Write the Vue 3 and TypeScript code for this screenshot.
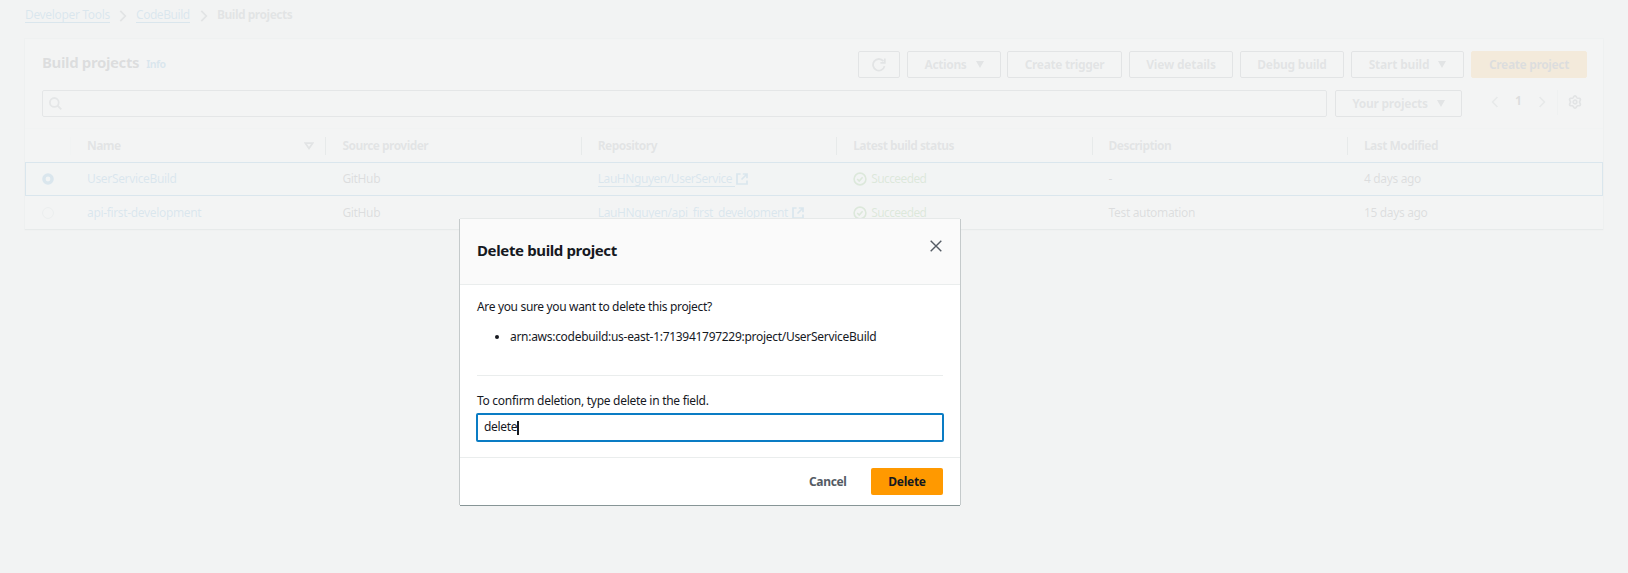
<script setup lang="ts">
import { ref } from 'vue'

interface Project {
  name: string
  provider: string
  repo: string
  status: string
  description: string
  modified: string
}

const columns: string[] = ['Name', 'Source provider', 'Repository', 'Latest build status', 'Description', 'Last Modified']

const projects: Project[] = [
  { name: 'UserServiceBuild', provider: 'GitHub', repo: 'LauHNguyen/UserService', status: 'Succeeded', description: '-', modified: '4 days ago' },
  { name: 'api-first-development', provider: 'GitHub', repo: 'LauHNguyen/api_first_development', status: 'Succeeded', description: 'Test automation', modified: '15 days ago' },
]

const selected = ref<string>('UserServiceBuild')
const confirmation = ref<string>('delete')

// Six-toothed gear outline around (7, 7), first tooth pointing up.
const gear: string =
  'M' +
  Array.from({ length: 72 }, (_, i) => {
    const a = (i / 72) * Math.PI * 2
    const r = 5.3 + 0.8 * Math.cos(6 * a)
    return `${(7 + r * Math.sin(a)).toFixed(2)} ${(7 - r * Math.cos(a)).toFixed(2)}`
  }).join('L') +
  'Z'
</script>

<template>
  <div class="page">
    <nav class="crumbs">
      <a class="crumb">Developer Tools</a>
      <svg class="chev" viewBox="0 0 8 12"><path d="M1.3 .8 6.3 6 1.3 11.2" /></svg>
      <a class="crumb code">CodeBuild</a>
      <svg class="chev" viewBox="0 0 8 12"><path d="M1.3 .8 6.3 6 1.3 11.2" /></svg>
      <span class="current">Build projects</span>
    </nav>

    <section class="panel">
      <header class="panel-head">
        <h1>Build projects</h1>
        <a class="info">Info</a>
        <div class="actions">
          <button class="btn refresh" aria-label="Refresh">
            <svg width="14" height="14" viewBox="0 0 14 14"><path d="M12.5 8.1A5.8 5.8 0 1 1 11.4 3.2M12.8 .4V4.8H8.4" /></svg>
          </button>
          <button class="btn w-actions">Actions <i class="caret" /></button>
          <button class="btn w-trigger">Create trigger</button>
          <button class="btn w-view">View details</button>
          <button class="btn w-debug">Debug build</button>
          <button class="btn w-start">Start build <i class="caret" /></button>
          <button class="btn primary w-create">Create project</button>
        </div>
      </header>

      <div class="filters">
        <div class="search">
          <svg width="13" height="13" viewBox="0 0 13 13"><circle cx="5.3" cy="5.4" r="4.4" /><path d="m8.4 8.5 3.9 3.8" /></svg>
        </div>
        <button class="btn w-your">Your projects <i class="caret" /></button>
        <div class="pager">
          <svg class="arrow" viewBox="0 0 8 12"><path d="M6.4 1 1.6 6l4.8 5" /></svg>
          <b>1</b>
          <svg class="arrow" viewBox="0 0 8 12"><path d="M1.6 1 6.4 6l-4.8 5" /></svg>
        </div>
        <div class="settings">
          <svg width="14" height="14" viewBox="0 0 14 14">
            <path :d="gear" />
            <circle cx="7" cy="7" r="1.8" />
          </svg>
        </div>
      </div>

      <div class="row head">
        <div class="cell pick" />
        <div v-for="(c, i) in columns" :key="c" class="cell">
          <span>{{ c }}</span>
          <svg v-if="i === 0" class="sort" width="10" height="8" viewBox="0 0 10 8"><path d="M1.4 1.2h7.2L5 6.4z" /></svg>
        </div>
      </div>

      <div v-for="p in projects" :key="p.name" class="row" :class="{ selected: p.name === selected }">
        <div class="cell pick">
          <svg class="radio" width="12" height="12" viewBox="0 0 12 12"><circle cx="6" cy="6" :r="p.name === selected ? 4.1 : 5.4" /></svg>
        </div>
        <div class="cell link name">{{ p.name }}</div>
        <div class="cell">{{ p.provider }}</div>
        <div class="cell link">
          <span class="repo">{{ p.repo }}</span>
          <svg class="ext" width="12" height="12" viewBox="0 0 12 12"><path d="M4.6 1H1v10h10V7.4M6.8 1H11v4.2M11 1 5.5 6.5" /></svg>
        </div>
        <div class="cell ok">
          <svg width="14" height="14" viewBox="0 0 14 14"><circle cx="7" cy="7" r="5.9" /><path d="m4.2 7 2 2 3.4-3.7" /></svg>
          <span>{{ p.status }}</span>
        </div>
        <div class="cell">{{ p.description }}</div>
        <div class="cell">{{ p.modified }}</div>
      </div>
    </section>

    <div class="overlay" />

    <div class="modal" role="dialog">
      <header class="modal-head">
        <h2>Delete build project</h2>
        <svg class="close" width="12" height="12" viewBox="0 0 12 12"><path d="m.7 .7 10.6 10.6M11.3 .7 .7 11.3" /></svg>
      </header>
      <div class="modal-body">
        <p class="question">Are you sure you want to delete this project?</p>
        <ul>
          <li>arn:aws:codebuild:us-east-1:713941797229:project/UserServiceBuild</li>
        </ul>
        <hr />
        <p class="prompt">To confirm deletion, type delete in the field.</p>
        <div class="field"><span>{{ confirmation }}</span><i class="cursor" /></div>
      </div>
      <footer class="modal-foot">
        <button class="cancel">Cancel</button>
        <button class="delete">Delete</button>
      </footer>
    </div>
  </div>
</template>

<style>
body {
  margin: 0;
  background: #f2f3f3;
}
</style>

<style scoped>
.page {
  position: relative;
  box-sizing: border-box;
  height: 573px;
  padding: 0 25px;
  overflow: hidden;
  background: #f2f3f3;
  color: #16191f;
  font: 12px/18px "Noto Sans", "Open Sans", sans-serif;
  letter-spacing: -0.34px;
}
h1, h2, p, ul { margin: 0; }
svg { display: block; fill: none; stroke: currentColor; flex: none; }
button { font: inherit; letter-spacing: inherit; border: 0; background: none; padding: 0; }

.crumbs { display: flex; align-items: flex-start; height: 39px; box-sizing: border-box; padding-top: 6px; }
.crumb { color: #0073bb; border-bottom: 1px solid #0073bb; height: 16px; line-height: 18px; width: 85px; white-space: nowrap; }
.crumb.code { width: 54px; letter-spacing: -0.45px; }
.chev { width: 8px; height: 12px; margin: 4px 9px 0 9px; stroke: #545b64; stroke-width: 1.8; }
.crumb.code + .chev { margin-left: 10px; }
.current { font-weight: 700; color: #545b64; letter-spacing: -0.48px; }

.panel {
  box-sizing: border-box;
  height: 190px;
  background: #fff;
  box-shadow: 0 1px 1px #879596, 0 0 1px 1px #d5dbdb;
}
.panel-head { display: flex; height: 51px; padding: 0 16px 0 17px; }
h1 { font-size: 15px; line-height: 20px; padding-top: 13px; letter-spacing: -0.38px; }
.info { margin: 16px 0 0 7px; font-size: 10.5px; font-weight: 700; color: #0073bb; letter-spacing: -0.6px; }
.actions { display: flex; gap: 7px; margin: 12px 0 0 auto; }
.btn {
  box-sizing: border-box;
  display: flex;
  align-items: center;
  justify-content: center;
  height: 27px;
  border: 1px solid #545b64;
  border-radius: 2px;
  color: #545b64;
  font-weight: 700;
  line-height: 16px;
  letter-spacing: -0.36px;
}
.btn svg { stroke-width: 1.8; }
.caret { width: 0; border: 4.5px solid transparent; border-top: 7px solid #545b64; border-bottom: 0; margin-left: 9px; }
.refresh { width: 42px; }
.w-actions { width: 94px; margin-right: -1px; }
.w-trigger { width: 115px; }
.w-view { width: 104px; letter-spacing: -0.2px; }
.w-debug { width: 104px; letter-spacing: -0.25px; }
.w-start { width: 113px; letter-spacing: -0.2px; }
.w-create { width: 116px; }
.primary { background: #f90; border-color: #f90; color: #16191f; }

.filters { display: flex; align-items: flex-start; height: 38px; padding-left: 17px; border-bottom: 1px solid #eaeded; }
.search { box-sizing: border-box; width: 1285px; height: 27px; border: 1px solid #687078; border-radius: 2px; padding: 6px; margin-right: 8px; color: #687078; }
.search svg { stroke-width: 1.8; }
.w-your { width: 127px; letter-spacing: -0.26px; }
.pager { display: flex; align-items: center; gap: 16px; margin: 2px 0 0 29px; height: 18px; }
.pager .arrow { width: 8px; height: 12px; margin-top: 1px; stroke: #879596; stroke-width: 1.7; }
.settings { margin-left: 11px; border-left: 1px solid #d5dbdb; height: 25px; padding-left: 10px; color: #545b64; }
.settings svg { margin-top: 5px; stroke-width: 1.7; }

.row { box-sizing: border-box; display: grid; grid-template-columns: 46px repeat(5, 255.4px) 1fr; height: 33px; align-items: center; }
.cell { display: flex; align-items: center; padding-left: 16px; height: 18px; white-space: nowrap; }
.cell.pick { padding-left: 17px; }
.head { font-weight: 700; color: #545b64; letter-spacing: -0.55px; }
.head .cell { box-sizing: border-box; border-right: 1px solid #879596; padding-right: 11px; justify-content: space-between; }
.head .pick { border-color: #eaeded; }
.head .cell:last-child { border-right: 0; }
.sort { stroke-width: 1.8; margin-top: 1px; }
.row.selected { height: 34px; background: #f1faff; outline: 1px solid #0073bb; outline-offset: -1px; }
.radio { stroke: #aab7b8; stroke-width: 1; }
.selected .radio { stroke: #0073bb; stroke-width: 3.4; }
.link { color: #0073bb; }
.repo { border-bottom: 1px solid #0073bb; height: 15px; line-height: 16px; padding-right: 3px; margin-right: 1px; letter-spacing: -0.38px; }
.selected .repo { letter-spacing: -0.45px; }
.ext { stroke-width: 1.7; }
.ok { color: #1d8102; letter-spacing: -0.6px; }
.ok svg { stroke-width: 1.6; margin-right: 4px; }

.overlay { position: absolute; inset: 0; background: rgba(242, 243, 243, 0.9); }

.modal {
  position: absolute;
  left: 460px;
  top: 219px;
  width: 500px;
  height: 286px;
  background: #fff;
  box-shadow: 0 1px 0 #879596, -1px 0 0 #c5cacb, 1px 0 0 #c5cacb, 0 -1px 0 #e6e9e9;
}
.modal-head {
  box-sizing: border-box;
  display: flex;
  justify-content: space-between;
  height: 66px;
  padding: 21px 18px 0 17px;
  background: #fafafa;
  border-bottom: 1px solid #eaeded;
}
h2 { font-size: 15px; line-height: 20px; letter-spacing: -0.37px; }
.close { color: #545b64; stroke-width: 1.4; }
.modal-body { padding: 13px 17px 0; height: 172px; box-sizing: border-box; }
ul { padding: 12px 0 0 33px; letter-spacing: -0.29px; }
hr { margin: 29px 0 0; border: 0; border-top: 1px solid #eaeded; }
.prompt { padding-top: 16px; letter-spacing: -0.28px; }
.field {
  box-sizing: border-box;
  display: flex;
  align-items: center;
  height: 29px;
  margin: 3px -1px 0;
  padding-left: 6px;
  border: 2px solid #0a7cc4;
  border-radius: 2px;
}
.field span { line-height: 16px; padding-bottom: 1px; }
.cursor { width: 2px; height: 14px; background: #16191f; }
.modal-foot {
  box-sizing: border-box;
  display: flex;
  justify-content: flex-end;
  height: 48px;
  padding: 10px 17px 0;
  border-top: 1px solid #eaeded;
  font-weight: 700;
}
.cancel { width: 37px; height: 27px; margin-right: 25px; color: #545b64; }
.delete { width: 72px; height: 27px; border-radius: 2px; background: #f90; color: #16191f; letter-spacing: -0.25px; }
</style>
